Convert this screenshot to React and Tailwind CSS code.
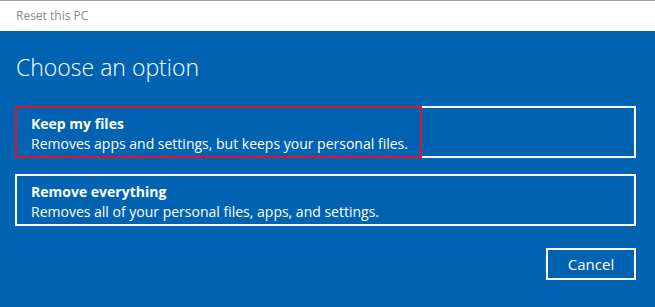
export default function App() {
  return (
    <div className="w-[655px] h-[307px] flex flex-col overflow-hidden font-['Open_Sans',sans-serif]">
      <div className="h-[31px] shrink-0 bg-white border-t border-[#a0a0a0] flex items-center pl-4 text-[12px] text-[#8a8a8a]">
        Reset this PC
      </div>
      <div className="flex-1 bg-[#0063b1] text-white flex flex-col pl-[15px] pr-[19px]">
        <div className="pt-[20px] pl-[1px] text-[23px] font-light leading-[32px] h-[75px]">Choose an option</div>
        <div className="relative h-[52px] border-2 border-white pl-[14px] pt-[6px]">
          <div className="font-bold text-[14px] leading-[20px]">Keep my files</div>
          <div className="text-[14px] leading-[20px]">Removes apps and settings, but keeps your personal files.</div>
          <div className="absolute -left-[2px] -top-[2px] w-[407px] h-[52px] border-2 border-[#e81123]" />
        </div>
        <div className="mt-[16px] h-[52px] border-2 border-white pl-[14px] pt-[6px]">
          <div className="font-bold text-[14px] leading-[20px]">Remove everything</div>
          <div className="text-[14px] leading-[20px]">Removes all of your personal files, apps, and settings.</div>
        </div>
        <div className="flex justify-end mt-[22px]">
          <div className="w-[90px] h-[32px] border-2 border-white flex items-center justify-center text-[15px]">
            Cancel
          </div>
        </div>
      </div>
    </div>
  );
}
